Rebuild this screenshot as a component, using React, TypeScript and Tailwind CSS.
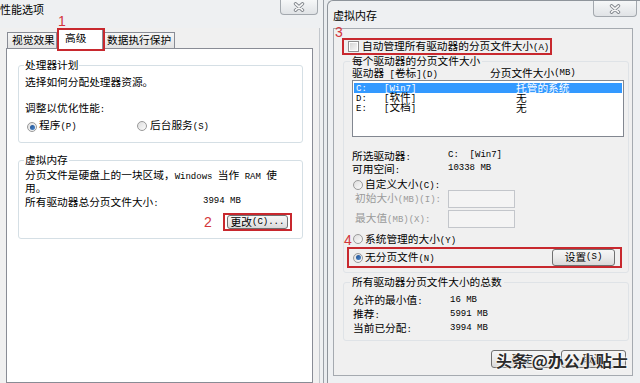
import React from "react";

function T({ s }: { s: string }) {
  const parts = s.split(/([\x00-\xff]+)/);
  return (
    <>
      {parts.map((p, i) =>
        p === "" ? null : /^[\x00-\xff]+$/.test(p) ? (
          <span key={i} className="font-['Liberation_Mono',monospace] text-[9px]">
            {p}
          </span>
        ) : (
          <span key={i}>{p}</span>
        )
      )}
    </>
  );
}

function CloseBtn({ className }: { className: string }) {
  return (
    <div
      className={
        "flex items-center justify-center rounded-b-[4px] border border-t-0 border-[#a3a8ae] bg-linear-to-b from-[#f6f7f8] to-[#e0e3e6] " +
        className
      }
    >
      <svg width="14" height="10" viewBox="0 0 14 10">
        <path d="M3.5 1.8 L10.5 8.2 M10.5 1.8 L3.5 8.2" stroke="#80858b" strokeWidth="3.4" strokeLinecap="round" />
        <path d="M3.5 1.8 L10.5 8.2 M10.5 1.8 L3.5 8.2" stroke="#f7f7f7" strokeWidth="1.6" strokeLinecap="round" />
      </svg>
    </div>
  );
}

function Radio({ checked }: { checked?: boolean }) {
  return (
    <span className="inline-flex w-[10px] h-[10px] shrink-0 items-center justify-center rounded-full border border-[#9a9a9a] bg-linear-to-br from-[#dedede] to-[#fbfbfb]">
      {checked && <span className="w-[5px] h-[5px] rounded-full bg-linear-to-br from-[#1f4f8f] to-[#4d8ad0]" />}
    </span>
  );
}

function Btn({ className, children }: { className: string; children: React.ReactNode }) {
  return (
    <div
      className={
        "flex items-center justify-center rounded-[3px] border border-[#707070] bg-linear-to-b from-[#f6f6f6] via-[#ebebeb] to-[#d9d9d9] leading-none " +
        className
      }
    >
      {children}
    </div>
  );
}

function Red({ children, className }: { children: React.ReactNode; className: string }) {
  return (
    <span className={"font-['Liberation_Sans',sans-serif] text-[14px] leading-none text-[#d3363b] " + className}>
      {children}
    </span>
  );
}

export default function App() {
  return (
    <div className="relative flex w-[640px] h-[383px] overflow-hidden bg-[#e9ecef] text-[10.7px] text-black font-['Noto_Sans_CJK_SC','Noto_Sans_CJK_JP',sans-serif] whitespace-pre">
      {/* LEFT WINDOW */}
      <div className="flex flex-col w-[324px] h-full border-r border-[#9aa0a7] bg-[#eef0f2]">
        <div className="flex h-[28px] items-start justify-between">
          <div className="pt-[3px] text-[11px] leading-[12px]">性能选项</div>
          <CloseBtn className="w-[38px] h-[15px] mr-[5px]" />
        </div>
        <div className="flex flex-1 flex-col mr-[3px] border-r border-[#c3c7cc] bg-[#f0f0f0] px-[6px]">
          {/* tabs */}
          <div className="flex h-[20px] items-end">
            <div className="ml-[1px] flex h-[16px] w-[50px] items-center border border-b-0 border-[#898c95] bg-linear-to-b from-[#f6f6f6] to-[#e3e3e3] pl-[4px] leading-none">
              视觉效果
            </div>
            <div className="relative z-10 mb-[-1px] flex h-[21px] w-[46px] items-start border border-b-0 border-[#898c95] bg-white pl-[7px] pt-[3px] leading-[12px]">
              高级
              <span className="absolute -left-[1px] -top-[1px] w-[48px] h-[23px] border-2 border-[#c8282e]" />
              <Red className="absolute left-[0px] -top-[15px]">1</Red>
            </div>
            <div className="flex h-[16px] w-[72px] items-center border border-b-0 border-l-0 border-[#898c95] bg-linear-to-b from-[#f6f6f6] to-[#e3e3e3] pl-[4px] leading-none">
              数据执行保护
            </div>
          </div>
          {/* tab panel */}
          <div className="flex flex-1 flex-col border border-[#898c95] bg-white">
            <fieldset className="ml-[11px] mr-[9px] mt-[10px] rounded-[3px] border border-[#d5dfe5]">
              <legend className="ml-[5px] px-[1px] leading-[12px]">处理器计划</legend>
              <div className="flex flex-col pl-[6px] pb-[10px]">
                <div className="mt-[4px] h-[13px] leading-[13px]">选择如何分配处理器资源。</div>
                <div className="mt-[13px] h-[13px] leading-[13px]">
                  <T s="调整以优化性能:" />
                </div>
                <div className="mt-[5px] flex h-[13px] items-center leading-[13px]">
                  <span className="ml-[2px]">
                    <Radio checked />
                  </span>
                  <span className="ml-[2px] w-[98px]">
                    <T s="程序(P)" />
                  </span>
                  <Radio />
                  <span className="ml-[3px]">
                    <T s="后台服务(S)" />
                  </span>
                </div>
              </div>
            </fieldset>
            <fieldset className="ml-[11px] mr-[9px] mt-[11px] rounded-[3px] border border-[#d5dfe5]">
              <legend className="ml-[5px] px-[1px] leading-[12px]">虚拟内存</legend>
              <div className="flex flex-col pl-[6px] pb-[7px]">
                <div className="mt-[2px] h-[13px] leading-[13px]">
                  <T s="分页文件是硬盘上的一块区域，Windows 当作 RAM 使" />
                </div>
                <div className="h-[13px] leading-[13px]">用。</div>
                <div className="mt-[1px] flex h-[13px] leading-[13px]">
                  <span className="w-[178px]">
                    <T s="所有驱动器总分页文件大小:" />
                  </span>
                  <T s="3994 MB" />
                </div>
                <div className="mt-[5px] flex h-[18px] items-center">
                  <Red className="ml-[179px] w-[19px]">2</Red>
                  <div className="flex h-[18px] w-[69px] items-center justify-center border-2 border-[#c8282e]">
                    <Btn className="w-[61px] h-[14px]">
                      <T s="更改(C)..." />
                    </Btn>
                  </div>
                </div>
              </div>
            </fieldset>
          </div>
        </div>
      </div>

      {/* RIGHT WINDOW */}
      <div className="flex flex-1 flex-col h-full bg-[#e9ecef]">
        <div className="ml-[3px] flex flex-1 flex-col rounded-tl-[6px] border-l border-t border-[#8e949b] bg-[#eef0f2]">
          <div className="flex h-[27px] items-start justify-between">
            <div className="ml-[5px] mt-[8px] text-[11px] leading-[12px]">虚拟内存</div>
            <CloseBtn className="w-[44px] h-[16px] mr-[3px]" />
          </div>
          <div className="relative ml-[5px] mr-[7px] mb-[7px] flex flex-1 flex-col border border-[#a5aab0] bg-[#f0f0f0]">
            <Red className="absolute left-[1px] -top-[4px]">3</Red>
            <div className="ml-[8px] mt-[9px] flex h-[17px] w-[210px] items-center border-2 border-[#c8282e] pl-[4px]">
              <span className="flex h-[11px] w-[11px] items-center justify-center border border-[#8f8f8f] bg-white">
                <span className="h-[7px] w-[7px] bg-linear-to-br from-[#d6d6d6] to-[#f6f6f6]" />
              </span>
              <span className="ml-[3px] leading-[12px]">
                <T s="自动管理所有驱动器的分页文件大小(A)" />
              </span>
            </div>
            <fieldset className="ml-[9px] mr-[3px] rounded-[3px] border border-[#dfe3e7]">
              <legend className="ml-[6px] px-[2px] leading-[12px]">每个驱动器的分页文件大小</legend>
              <div className="flex flex-col pl-[8px] pb-[4px]">
                <div className="flex h-[12px] leading-[12px]">
                  <span className="w-[138px]">
                    <T s="驱动器 [卷标](D)" />
                  </span>
                  <T s="分页文件大小(MB)" />
                </div>
                <div className="mt-[1px] flex h-[57px] w-[272px] flex-col border border-[#828790] bg-white px-[1px] pt-[2px]">
                  <div className="flex h-[10px] items-center bg-[#3399ff] pl-[2px] leading-[10px] text-white">
                    <span className="w-[28px]">
                      <T s="C:" />
                    </span>
                    <span className="w-[132px]">
                      <T s="[Win7]" />
                    </span>
                    <span>托管的系统</span>
                  </div>
                  <div className="flex h-[10px] items-center pl-[2px] leading-[10px]">
                    <span className="w-[28px]">
                      <T s="D:" />
                    </span>
                    <span className="w-[132px]">
                      <T s="[软件]" />
                    </span>
                    <span>无</span>
                  </div>
                  <div className="flex h-[10px] items-center pl-[2px] leading-[10px]">
                    <span className="w-[28px]">
                      <T s="E:" />
                    </span>
                    <span className="w-[132px]">
                      <T s="[文档]" />
                    </span>
                    <span>无</span>
                  </div>
                </div>
                <div className="mt-[12px] flex h-[13px] leading-[13px]">
                  <span className="w-[96px]">
                    <T s="所选驱动器:" />
                  </span>
                  <T s="C:  [Win7]" />
                </div>
                <div className="flex h-[13px] leading-[13px]">
                  <span className="w-[96px]">
                    <T s="可用空间:" />
                  </span>
                  <T s="10338 MB" />
                </div>
                <div className="mt-[5px] flex h-[10px] items-center leading-[10px]">
                  <span className="ml-[1px]">
                    <Radio />
                  </span>
                  <span className="ml-[2px]">
                    <T s="自定义大小(C):" />
                  </span>
                </div>
                <div className="flex h-[18px] items-center">
                  <span className="ml-[3px] w-[93px] leading-[12px] text-[#9a9a9a]">
                    <T s="初始大小(MB)(I):" />
                  </span>
                  <span className="h-[18px] w-[67px] border border-[#c3c6cb] bg-[#f4f4f4]" />
                </div>
                <div className="mt-[2px] flex h-[18px] items-center">
                  <span className="ml-[3px] w-[93px] leading-[12px] text-[#9a9a9a]">
                    <T s="最大值(MB)(X):" />
                  </span>
                  <span className="h-[18px] w-[67px] border border-[#c3c6cb] bg-[#f4f4f4]" />
                </div>
                <div className="relative mt-[6px] flex h-[12px] items-center leading-[12px]">
                  <Red className="absolute -left-[8px] top-[-1px]">4</Red>
                  <span className="ml-[1px]">
                    <Radio />
                  </span>
                  <span className="ml-[2px]">
                    <T s="系统管理的大小(Y)" />
                  </span>
                </div>
                <div className="-ml-[5px] mt-[1px] flex h-[21px] w-[275px] items-center border-2 border-[#c8282e] pl-[4px] pr-[5px]">
                  <Radio checked />
                  <span className="ml-[2px] leading-[12px]">
                    <T s="无分页文件(N)" />
                  </span>
                  <Btn className="ml-auto w-[63px] h-[17px]">
                    <T s="设置(S)" />
                  </Btn>
                </div>
              </div>
            </fieldset>
            <fieldset className="ml-[9px] mr-[3px] mt-[3px] rounded-[3px] border border-[#dfe3e7]">
              <legend className="ml-[6px] px-[2px] leading-[12px]">所有驱动器分页文件大小的总数</legend>
              <div className="flex flex-col pl-[9px] pb-[5px]">
                <div className="mt-[5px] flex h-[14px] leading-[14px]">
                  <span className="w-[97px]">
                    <T s="允许的最小值:" />
                  </span>
                  <T s="16 MB" />
                </div>
                <div className="flex h-[14px] leading-[14px]">
                  <span className="w-[97px]">
                    <T s="推荐:" />
                  </span>
                  <T s="5991 MB" />
                </div>
                <div className="flex h-[14px] leading-[14px]">
                  <span className="w-[97px]">
                    <T s="当前已分配:" />
                  </span>
                  <T s="3994 MB" />
                </div>
              </div>
            </fieldset>
            <div className="mt-[9px] flex justify-end gap-[7px] pr-[6px]">
              <Btn className="w-[63px] h-[18px]">确定</Btn>
              <Btn className="w-[65px] h-[18px]">取消</Btn>
            </div>
          </div>
        </div>
      </div>

      {/* watermark */}
      <div className="absolute left-[496px] top-[350px] text-[16px] leading-[20px] font-bold text-[#2b2b2b] [text-shadow:0_0_2px_#fff,0_0_2px_#fff,0_0_3px_#fff]">
        头条 @办公小贴士
      </div>
    </div>
  );
}
